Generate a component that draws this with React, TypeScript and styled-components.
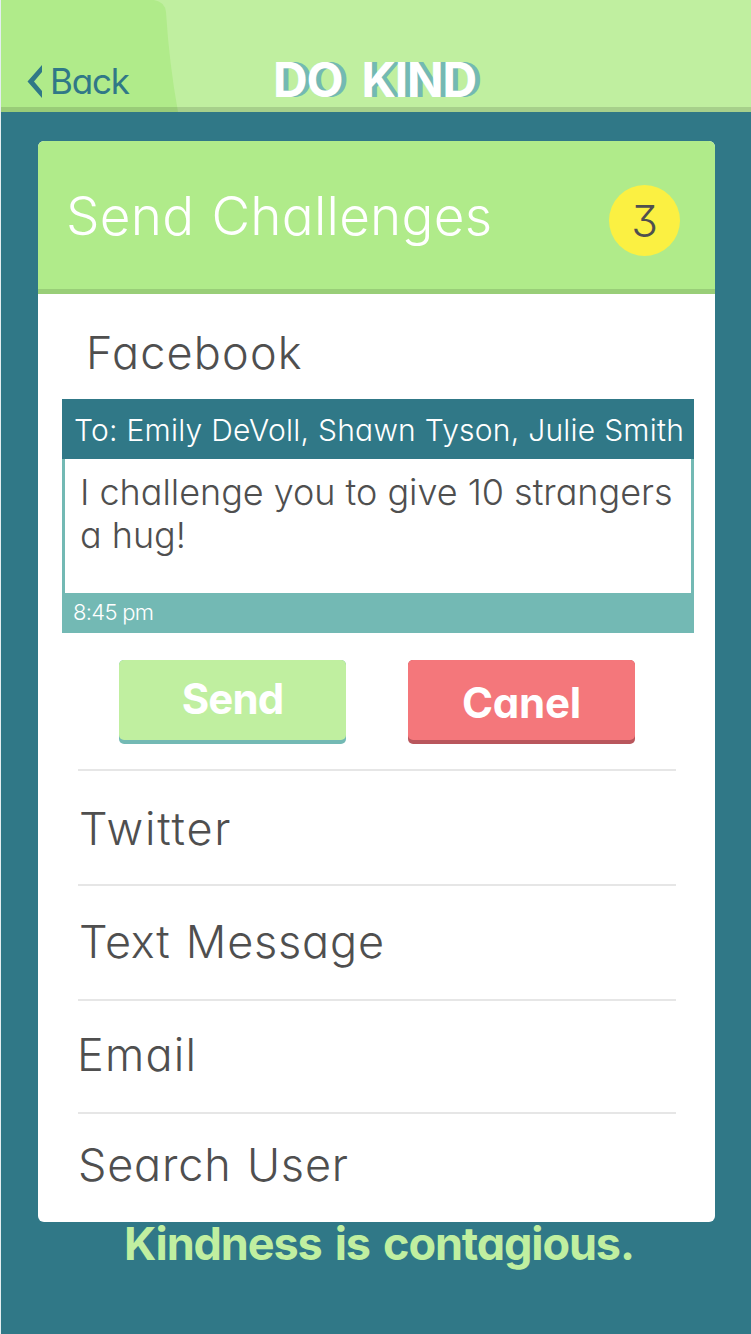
import React from "react";
import styled, { createGlobalStyle } from "styled-components";

const GlobalStyle = createGlobalStyle`
  *, *::before, *::after { box-sizing: border-box; }
  body {
    margin: 0;
    background: #307887;
    font-family: Inter, "Liberation Sans", sans-serif;
    font-feature-settings: "cv11" 1, "cv09" 1, "calt" 0;
    color: #4f4f4f;
  }
  h1, h2, p, ul { margin: 0; padding: 0; font-weight: inherit; }
  button { font: inherit; font-feature-settings: inherit; border: 0; padding: 0; cursor: pointer; }
`;

const Screen = styled.div`
  width: 751px;
  height: 1334px;
  background: #307887;
  border-left: 1px solid #e4eef0;
  overflow: hidden;
  display: flex;
  flex-direction: column;
`;

const TopBar = styled.header`
  position: relative;
  height: 112px;
  flex: none;
  background: #c0efa0;
  display: flex;
  align-items: flex-start;
  margin-bottom: 29px;
`;

const TabShape = styled.svg`
  position: absolute;
  inset: 0;
`;

const BackButton = styled.button`
  position: relative;
  width: 177px;
  height: 112px;
  padding: 50px 0 0 26px;
  background: none;
  color: #307887;
  display: flex;
  align-items: center;
  font-size: 35px;
  line-height: 62px;
`;

const BackLabel = styled.span`
  margin-left: 8px;
  letter-spacing: -1.2px;
`;

const Title = styled.h1`
  position: relative;
  margin: 50px 0 0 95px;
  font-size: 48px;
  line-height: 59px;
  font-weight: 700;
  letter-spacing: -1.2px;
  word-spacing: 9px;
  color: #fff;
  text-shadow: 5px 0 0 #73b9b4;
  white-space: nowrap;
`;

const Card = styled.main`
  margin-left: 37px;
  width: 677px;
  height: 1081px;
  flex: none;
  background: #fff;
  border-radius: 6px;
  overflow: hidden;
  display: flex;
  flex-direction: column;
`;

const CardHeader = styled.div`
  height: 153px;
  flex: none;
  background: #b0eb8a;
  border-bottom: 5px solid #99ce78;
  padding: 0 35px 0 28px;
  display: flex;
  justify-content: space-between;
`;

const CardTitle = styled.h2`
  font-size: 53px;
  line-height: 151px;
  font-weight: 300;
  letter-spacing: 0.25px;
  word-spacing: 2px;
  color: #fff;
  white-space: nowrap;
`;

const Badge = styled.span`
  width: 71px;
  height: 71px;
  margin-top: 43.5px;
  border-radius: 50%;
  background: #fbf042;
  font-size: 44px;
  line-height: 73px;
  font-weight: 300;
  text-align: center;
`;

const Option = styled.div<{ $height: number; $indent: number; $line: number; $track: number }>`
  height: ${(p) => p.$height}px;
  flex: none;
  padding-left: ${(p) => p.$indent}px;
  font-size: 45px;
  font-weight: 300;
  line-height: ${(p) => p.$line}px;
  letter-spacing: ${(p) => p.$track}px;
  word-spacing: 2px;
  white-space: nowrap;
`;

const Divider = styled.hr`
  flex: none;
  width: 598px;
  height: 2px;
  margin: 0 0 0 40px;
  border: 0;
  background: #e6e6e6;
`;

const Message = styled.section`
  width: 632px;
  margin-left: 24px;
  flex: none;
`;

const Recipients = styled.p`
  height: 60px;
  background: #307887;
  padding-left: 12px;
  color: #fff;
  font-size: 30px;
  line-height: 62px;
  font-weight: 300;
  letter-spacing: 0.25px;
  white-space: nowrap;
`;

const MessageBody = styled.p`
  height: 134px;
  padding: 12.5px 0 0 15px;
  border: solid #73b9b4;
  border-width: 0 3px;
  font-size: 36px;
  line-height: 43px;
  font-weight: 300;
  letter-spacing: -0.03px;
  white-space: pre-line;
`;

const Timestamp = styled.p`
  height: 40px;
  padding-left: 11px;
  background: #73b9b4;
  color: #fff;
  font-size: 22px;
  line-height: 38px;
  font-weight: 350;
  letter-spacing: -0.7px;
`;

const Actions = styled.div`
  display: flex;
  gap: 62px;
  margin: 27px 0 25px 81px;
`;

const ActionButton = styled.button<{ $face: string; $edge: string; $line: number; $track: number }>`
  width: 227px;
  height: 84px;
  border-radius: 5px;
  background: ${(p) => p.$edge};
  color: #fff;
  display: flex;
  align-items: flex-start;
  font-size: 42px;
  font-weight: 700;
  line-height: ${(p) => p.$line}px;
  letter-spacing: ${(p) => p.$track}px;

  span {
    flex: 1;
    height: 80px;
    border-radius: 5px;
    background: ${(p) => p.$face};
  }
`;

const Tagline = styled.p`
  padding-left: 123px;
  margin-top: -6px;
  font-size: 45px;
  line-height: 56px;
  font-weight: 700;
  letter-spacing: -1.1px;
  word-spacing: 3.5px;
  color: #c0efa0;
  white-space: nowrap;
`;

export default function App() {
  return (
    <>
      <GlobalStyle />
      <Screen>
        <TopBar>
          <TabShape width="750" height="112" viewBox="0 0 750 112">
            <path d="M0 0H153Q164 2 165 12Q168 62 177 112H0Z" fill="#b0eb8a" />
            <rect y="107" width="750" height="5" fill="#000" opacity="0.13" />
          </TabShape>
          <BackButton>
            <svg width="15" height="33" viewBox="0 0 15 33">
              <path d="M15 0V7L7 16.5L15 26V33L0.5 16.5Z" fill="#307887" />
            </svg>
            <BackLabel>Back</BackLabel>
          </BackButton>
          <Title>DO KIND</Title>
        </TopBar>

        <Card>
          <CardHeader>
            <CardTitle>Send Challenges</CardTitle>
            <Badge>3</Badge>
          </CardHeader>

          <Option $height={104.5} $indent={48} $line={117} $track={1.2}>Facebook</Option>
          <Message>
            <Recipients>To: Emily DeVoll, Shawn Tyson, Julie Smith</Recipients>
            <MessageBody>{"I challenge you to give 10 strangers\na hug!"}</MessageBody>
            <Timestamp>8:45 pm</Timestamp>
          </Message>
          <Actions>
            <ActionButton $face="#c0efa0" $edge="#73b9b4" $line={77} $track={-0.9}><span>Send</span></ActionButton>
            <ActionButton $face="#f4777b" $edge="#b9565c" $line={86} $track={-0.2}><span>Canel</span></ActionButton>
          </Actions>
          <Divider />
          <Option $height={113} $indent={41} $line={115} $track={1.8}>Twitter</Option>
          <Divider />
          <Option $height={113} $indent={41} $line={112} $track={0.8}>Text Message</Option>
          <Divider />
          <Option $height={111} $indent={39} $line={108} $track={1.2}>Email</Option>
          <Divider />
          <Option $height={108} $indent={40} $line={101} $track={0.8}>Search User</Option>
        </Card>
        <Tagline>Kindness is contagious.</Tagline>
      </Screen>
    </>
  );
}
